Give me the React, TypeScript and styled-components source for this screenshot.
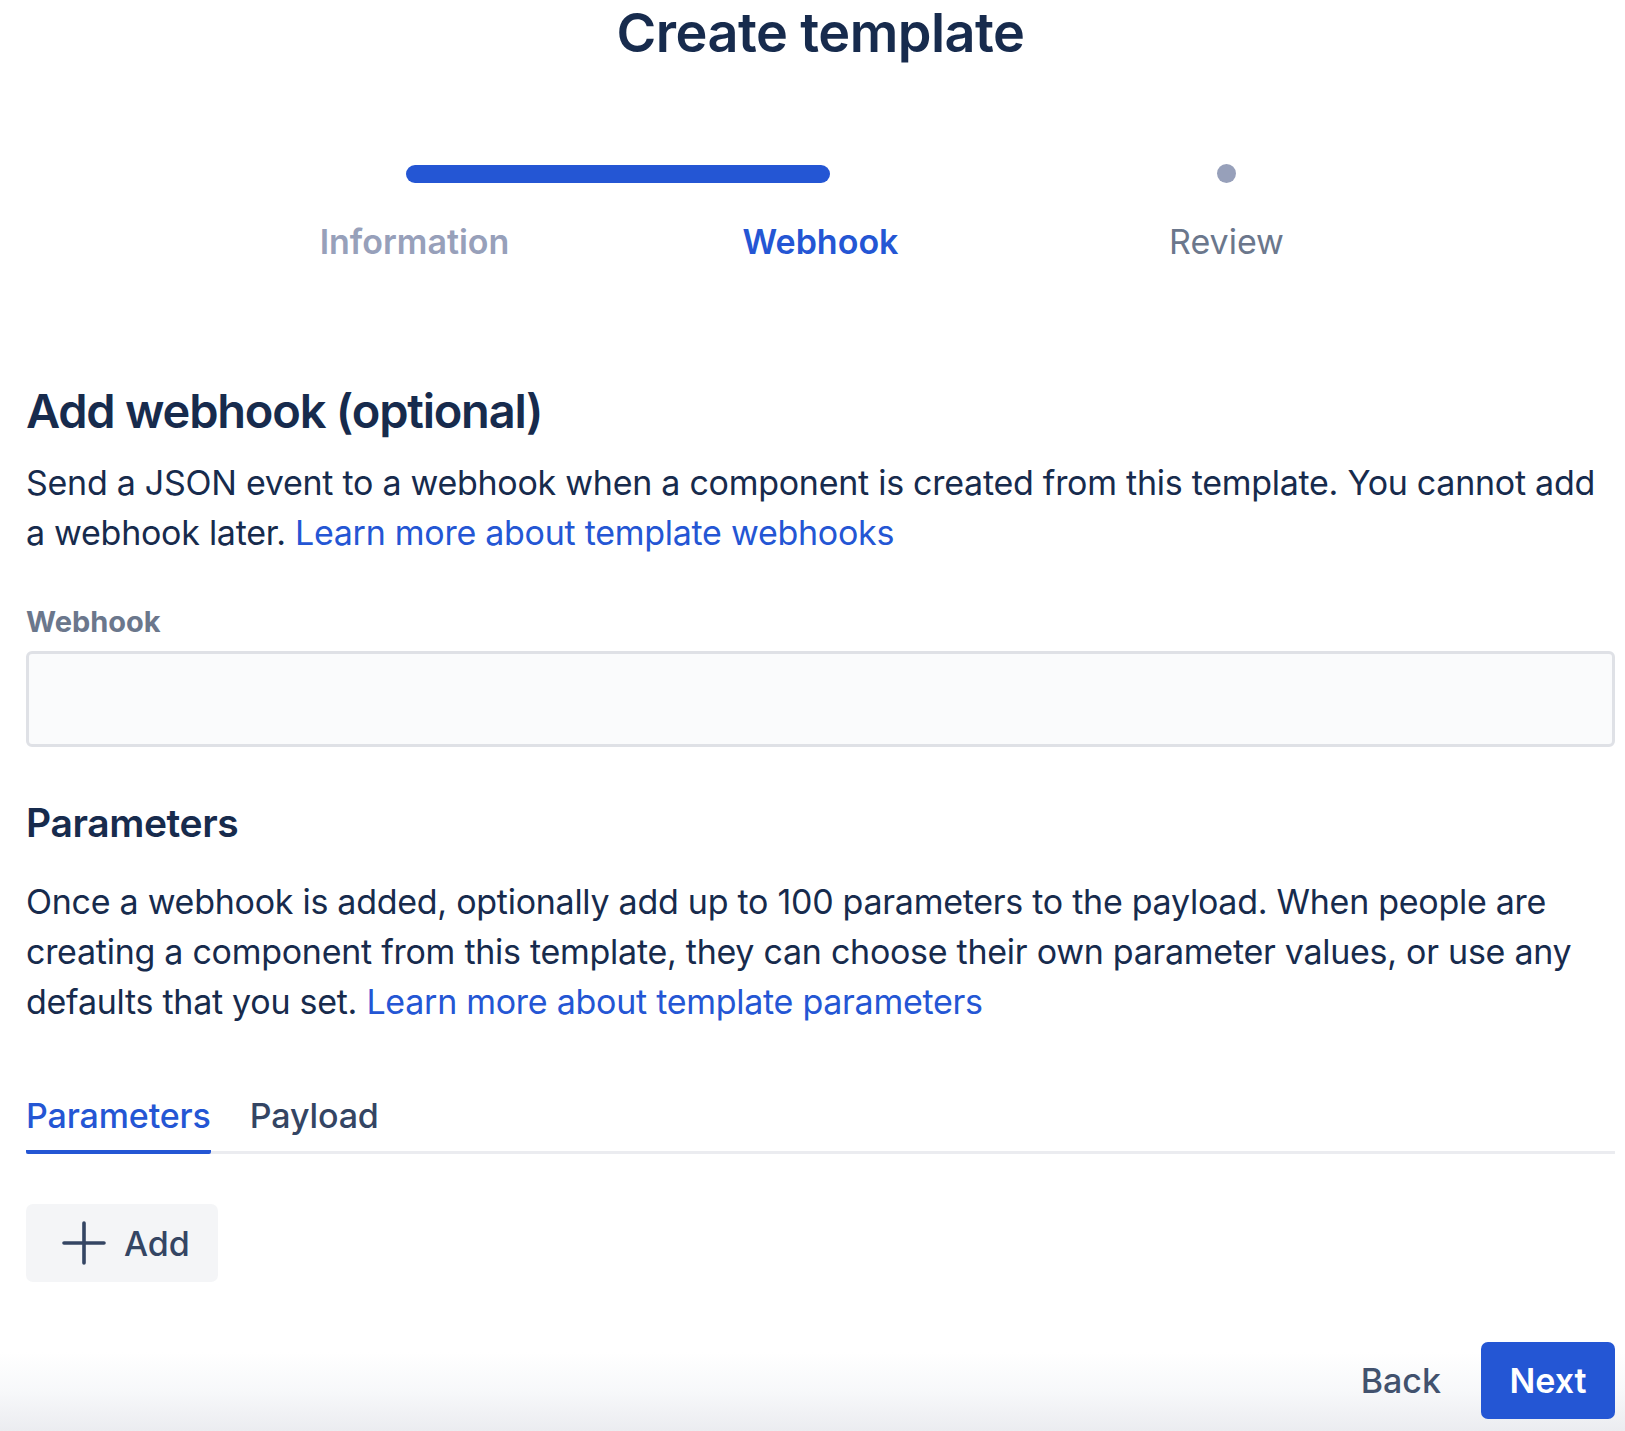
import React from "react";
import styled, { createGlobalStyle } from "styled-components";

type StepState = "done" | "current" | "todo";

type StepType = {
  label: string;
  state: StepState;
};

const steps: Array<StepType> = [
  { label: "Information", state: "done" },
  { label: "Webhook", state: "current" },
  { label: "Review", state: "todo" },
];

const stepColors: Record<StepState, string> = {
  done: "#97a0ba",
  current: "#2456d4",
  todo: "#6b778c",
};

const PlusIcon = () => (
  <svg width="44" height="44" viewBox="0 0 44 44" fill="none">
    <path
      d="M22 2v40M2 22h40"
      stroke="currentColor"
      strokeWidth="3.6"
      strokeLinecap="round"
    />
  </svg>
);

const App: React.FC = () => {
  return (
    <Page>
      <GlobalStyle />
      <Content>
        <Title>Create template</Title>

        <Stepper>
          <Track>
            <Progress />
            <Dot />
          </Track>
          {steps.map((step) => (
            <StepLabel key={step.label} state={step.state}>
              {step.label}
            </StepLabel>
          ))}
        </Stepper>

        <Heading>Add webhook (optional)</Heading>
        <Paragraph>
          Send a JSON event to a webhook when a component is created from this
          template. You cannot add a webhook later.{" "}
          <Link href="#">Learn more about template webhooks</Link>
        </Paragraph>

        <Label htmlFor="webhook">Webhook</Label>
        <Input id="webhook" type="text" />

        <SubHeading>Parameters</SubHeading>
        <Paragraph>
          Once a webhook is added, optionally add up to 100 parameters to the
          payload. When people are creating a component from this template,
          they can choose their own parameter values, or use any defaults that
          you set. <Link href="#">Learn more about template parameters</Link>
        </Paragraph>

        <TabList>
          <Tab active>Parameters</Tab>
          <Tab>Payload</Tab>
        </TabList>

        <AddButton>
          <PlusIcon />
          <span>Add</span>
        </AddButton>
      </Content>

      <Footer>
        <BackButton>Back</BackButton>
        <NextButton>Next</NextButton>
      </Footer>
    </Page>
  );
};

const GlobalStyle = createGlobalStyle`
  html, body {
    margin: 0;
    padding: 0;
    background: #ffffff;
  }

  body {
    font-family: Inter, "Noto Sans", sans-serif;
    color: #172b4d;
    -webkit-font-smoothing: antialiased;
  }

  * {
    box-sizing: border-box;
  }
`;

const Page = styled.div`
  width: 1625px;
  min-height: 1431px;
  display: flex;
  flex-direction: column;
`;

const Content = styled.div`
  padding: 0 10px 0 26px;
  display: flex;
  flex-direction: column;
  align-items: flex-start;
  flex-grow: 1;
`;

const Title = styled.h1`
  align-self: stretch;
  margin: 0;
  text-align: center;
  font-size: 54px;
  line-height: 66px;
  font-weight: 600;
  letter-spacing: -0.01em;
  color: #172b4d;
`;

const Stepper = styled.div`
  align-self: center;
  margin-top: 98px;
  width: 1218px;
  display: grid;
  grid-template-columns: repeat(3, 1fr);
  row-gap: 38px;
`;

const Track = styled.div`
  grid-column: 1 / 4;
  display: grid;
  grid-template-columns: repeat(3, 1fr);
  align-items: center;
  height: 18px;
`;

const Progress = styled.div`
  grid-column: 1 / 3;
  margin: 0 calc(25% - 9px);
  height: 18px;
  border-radius: 9px;
  background-color: #2456d4;
`;

const Dot = styled.div`
  grid-column: 3;
  justify-self: center;
  width: 19px;
  height: 19px;
  border-radius: 50%;
  background-color: #97a0ba;
`;

const StepLabel = styled.div<{ state: StepState }>`
  text-align: center;
  font-size: 34px;
  line-height: 44px;
  font-weight: ${({ state }) => (state === "todo" ? 400 : 600)};
  color: ${({ state }) => stepColors[state]};
`;

const Heading = styled.h2`
  margin: 119px 0 0;
  font-size: 47px;
  line-height: 56px;
  font-weight: 600;
  letter-spacing: -0.026em;
  color: #172b4d;
`;

const SubHeading = styled.h3`
  margin: 53px 0 0;
  font-size: 39px;
  line-height: 46px;
  font-weight: 600;
  letter-spacing: -0.01em;
  color: #172b4d;
`;

const Paragraph = styled.p`
  margin: 19px 0 0;
  font-size: 34px;
  line-height: 50px;
  font-weight: 400;
  letter-spacing: -0.008em;
  color: #172b4d;

  ${SubHeading} + & {
    margin-top: 31px;
  }
`;

const Link = styled.a`
  color: #2456d4;
  text-decoration: none;
`;

const Label = styled.label`
  margin-top: 47px;
  font-size: 29px;
  line-height: 34px;
  font-weight: 700;
  color: #6b778c;
`;

const Input = styled.input`
  align-self: stretch;
  margin-top: 12px;
  height: 96px;
  padding: 0 20px;
  border: 3px solid #dfe1e6;
  border-radius: 6px;
  background-color: #fafbfc;
  font-family: inherit;
  font-size: 34px;
  color: #172b4d;
  outline: none;
`;

const TabList = styled.div`
  align-self: stretch;
  margin-top: 67px;
  display: flex;
  gap: 39px;
  box-shadow: inset 0 -3px 0 #ebecf0;
`;

const Tab = styled.div<{ active?: boolean }>`
  padding-bottom: 12px;
  font-size: 34px;
  line-height: 44px;
  font-weight: 500;
  letter-spacing: -0.004em;
  color: ${({ active }) => (active ? "#2456d4" : "#344563")};
  border-bottom: 4px solid
    ${({ active }) => (active ? "#2456d4" : "transparent")};
  border-radius: 0 0 2px 2px;
`;

const AddButton = styled.button`
  margin-top: 50px;
  height: 78px;
  padding: 0 28px 0 36px;
  display: flex;
  align-items: center;
  gap: 18px;
  border: none;
  border-radius: 7px;
  background-color: #f4f5f7;
  font-family: inherit;
  font-size: 34px;
  font-weight: 500;
  color: #344563;
`;

const Footer = styled.div`
  height: 119px;
  padding: 30px 10px 12px 26px;
  display: flex;
  justify-content: flex-end;
  align-items: stretch;
  gap: 16px;
  background: linear-gradient(
    to bottom,
    #ffffff 0px,
    #ffffff 40px,
    #f7f8fa 80px,
    #ebecf0 119px
  );
`;

const BackButton = styled.button`
  padding: 0 24px;
  border: none;
  background: transparent;
  font-family: inherit;
  font-size: 34px;
  font-weight: 500;
  color: #42526e;
`;

const NextButton = styled.button`
  width: 134px;
  border: none;
  border-radius: 7px;
  background-color: #2456d4;
  font-family: inherit;
  font-size: 34px;
  font-weight: 600;
  color: #ffffff;
`;

export default App;
